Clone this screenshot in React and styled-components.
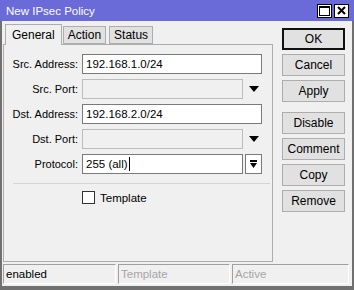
import React from "react";
import styled, { createGlobalStyle } from "styled-components";

const GlobalStyle = createGlobalStyle`
  html, body {
    margin: 0;
    padding: 0;
    background: #f0f0f0;
  }
  * {
    box-sizing: border-box;
  }
`;

const Window = styled.div`
  width: 354px;
  height: 290px;
  display: flex;
  flex-direction: column;
  background: #f0f0f0;
  font-family: "Liberation Sans", Arial, sans-serif;
  font-size: 11px;
  color: #000;
`;

const TitleBar = styled.div`
  height: 21px;
  flex: none;
  background: #6a6ad8;
  display: flex;
  align-items: center;
  padding: 0 5px 0 6px;
  color: #fff;
  font-size: 11.5px;
`;

const Title = styled.div`
  flex: 1;
`;

const TitleButtons = styled.div`
  display: flex;
  gap: 2px;
`;

const TitleButton = styled.div`
  width: 15px;
  height: 14px;
  background: #fff;
  border: 1px solid #000;
  display: flex;
  align-items: center;
  justify-content: center;
`;

const Frame = styled.div`
  flex: 1;
  display: flex;
  flex-direction: column;
  border-left: 2px solid #707070;
  border-right: 2px solid #707070;
  border-bottom: 4px solid #707070;
  padding: 0 1px 2px 1px;
`;

const Main = styled.div`
  flex: 1;
  display: flex;
`;

const TabArea = styled.div`
  width: 270px;
  display: flex;
  flex-direction: column;
  padding-top: 3px;
`;

const TabRow = styled.div`
  display: flex;
  align-items: flex-end;
  height: 20px;
  padding-left: 2px;
  position: relative;
  z-index: 1;
`;

const Tab = styled.div`
  height: ${(p) => (p.$active ? "21px" : "18px")};
  padding: 0 ${(p) => (p.$active ? "6px" : "4px")};
  margin-right: ${(p) => (p.$active ? "0" : "2px")};
  margin-left: ${(p) => (p.$active ? "0" : "1px")};
  display: flex;
  align-items: center;
  background: ${(p) => (p.$active ? "#f0f0f0" : "#e1e1e1")};
  border: 1px solid #adadad;
  border-bottom: ${(p) => (p.$active ? "none" : "1px solid #adadad")};
  font-size: 12px;
  margin-bottom: ${(p) => (p.$active ? "-1px" : "0")};
`;

const Panel = styled.div`
  height: 218px;
  border: 1px solid #adadad;
  padding: 9px 0 0 0;
  display: flex;
  flex-direction: column;
`;

const Form = styled.div`
  display: grid;
  grid-template-columns: 74px 180px;
  column-gap: 4px;
  row-gap: 5px;
  align-items: center;
`;

const Label = styled.div`
  text-align: right;
  white-space: nowrap;
`;

const FieldWrap = styled.div`
  display: flex;
  align-items: center;
  height: 20px;
`;

const Input = styled.div`
  width: ${(p) => p.$width || 180}px;
  height: 20px;
  border: 1px solid ${(p) => (p.$disabled ? "#bcbcbc" : "#7a7a7a")};
  background: ${(p) => (p.$disabled ? "#f0f0f0" : "#fff")};
  padding: 0 3px;
  display: flex;
  align-items: center;
  font-size: 11.5px;
  white-space: nowrap;
`;

const Caret = styled.span`
  display: inline-block;
  width: 1px;
  height: 14px;
  background: #000;
  margin-left: 1px;
`;

const ArrowSlot = styled.div`
  width: 19px;
  height: 20px;
  display: flex;
  align-items: center;
  justify-content: center;
  padding-left: 3px;
`;

const DropButton = styled.div`
  width: 17px;
  height: 20px;
  margin-left: 2px;
  border: 1px solid #7a7a7a;
  background: #fff;
  display: flex;
  align-items: center;
  justify-content: center;
`;

const Separator = styled.div`
  height: 1px;
  background: #d4d4d4;
  margin: 9px 2px 0 9px;
`;

const CheckRow = styled.div`
  display: flex;
  align-items: center;
  gap: 5px;
  padding-left: 78px;
  margin-top: 7px;
  font-size: 11.5px;
`;

const CheckBox = styled.div`
  width: 13px;
  height: 13px;
  border: 1px solid #333;
  background: #fff;
`;

const ButtonColumn = styled.div`
  flex: 1;
  display: flex;
  flex-direction: column;
  padding: 7px 0 0 9px;
`;

const Button = styled.div`
  width: 63px;
  height: 22px;
  margin-bottom: ${(p) => (p.$gapAfter ? "10px" : "4px")};
  display: flex;
  align-items: center;
  justify-content: center;
  background: #e1e1e1;
  border: ${(p) => (p.$default ? "2px solid #111" : "1px solid #adadad")};
  font-size: 12px;
`;

const StatusBar = styled.div`
  height: 20px;
  margin-top: 1px;
  display: flex;
  gap: 2px;
  flex: none;
`;

const StatusCell = styled.div`
  width: ${(p) => p.$width}px;
  height: 20px;
  border-top: 1px solid #a0a0a0;
  border-left: 1px solid #a0a0a0;
  border-bottom: 1px solid #ffffff;
  border-right: 1px solid #ffffff;
  padding-left: 2px;
  display: flex;
  align-items: center;
  color: ${(p) => (p.$muted ? "#a6a6a6" : "#000")};
  font-size: 11.5px;
`;

const DownArrow = () => (
  <svg width="10" height="6" viewBox="0 0 10 6">
    <polygon points="0,0 10,0 5,6" fill="#000" />
  </svg>
);

const DropIcon = () => (
  <svg width="9" height="9" viewBox="0 0 9 9">
    <rect x="1" y="0" width="7" height="2" fill="#000" />
    <polygon points="1,3 8,3 4.5,8" fill="#000" />
  </svg>
);

const fields = [
  { label: "Src. Address:", value: "192.168.1.0/24" },
  { label: "Src. Port:", combo: true },
  { label: "Dst. Address:", value: "192.168.2.0/24" },
  { label: "Dst. Port:", combo: true },
];

const buttons = [
  { text: "OK", def: true },
  { text: "Cancel" },
  { text: "Apply", gap: true },
  { text: "Disable" },
  { text: "Comment" },
  { text: "Copy" },
  { text: "Remove" },
];

export default function App() {
  return (
    <>
      <GlobalStyle />
      <Window>
        <TitleBar>
          <Title>New IPsec Policy</Title>
          <TitleButtons>
            <TitleButton>
              <svg width="11" height="10" viewBox="0 0 11 10">
                <rect x="0.5" y="0.5" width="10" height="9" fill="none" stroke="#000" />
                <rect x="0.5" y="0.5" width="10" height="1.5" fill="#000" />
              </svg>
            </TitleButton>
            <TitleButton>
              <svg width="9" height="9" viewBox="0 0 9 9">
                <path d="M1 1 L8 8 M8 1 L1 8" stroke="#000" strokeWidth="2" />
              </svg>
            </TitleButton>
          </TitleButtons>
        </TitleBar>
        <Frame>
          <Main>
            <TabArea>
              <TabRow>
                <Tab $active>General</Tab>
                <Tab>Action</Tab>
                <Tab>Status</Tab>
              </TabRow>
              <Panel>
                <Form>
                  {fields.map((f) => (
                    <React.Fragment key={f.label}>
                      <Label>{f.label}</Label>
                      <FieldWrap>
                        {f.combo ? (
                          <>
                            <Input $width={161} $disabled />
                            <ArrowSlot>
                              <DownArrow />
                            </ArrowSlot>
                          </>
                        ) : (
                          <Input>{f.value}</Input>
                        )}
                      </FieldWrap>
                    </React.Fragment>
                  ))}
                  <Label>Protocol:</Label>
                  <FieldWrap>
                    <Input $width={161}>
                      255 (all)
                      <Caret />
                    </Input>
                    <DropButton>
                      <DropIcon />
                    </DropButton>
                  </FieldWrap>
                </Form>
                <Separator />
                <CheckRow>
                  <CheckBox />
                  Template
                </CheckRow>
              </Panel>
            </TabArea>
            <ButtonColumn>
              {buttons.map((b) => (
                <Button key={b.text} $default={b.def} $gapAfter={b.gap}>
                  {b.text}
                </Button>
              ))}
            </ButtonColumn>
          </Main>
          <StatusBar>
            <StatusCell $width={113}>enabled</StatusCell>
            <StatusCell $width={112} $muted>
              Template
            </StatusCell>
            <StatusCell $width={117} $muted>
              Active
            </StatusCell>
          </StatusBar>
        </Frame>
      </Window>
    </>
  );
}
